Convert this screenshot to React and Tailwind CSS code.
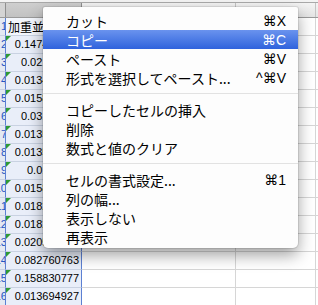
const values = [
  '0.147423581',
  '0.02185364',
  '0.013458719',
  '0.015821634',
  '0.03176584',
  '0.013596784',
  '0.013549021',
  '0.0174823',
  '0.015842793',
  '0.018245671',
  '0.018273942',
  '0.020587236',
  '0.082760763',
  '0.158830777',
  '0.013694927',
];

const menu = [
  { label: 'カット', key: '⌘X' },
  { label: 'コピー', key: '⌘C', active: true },
  { label: 'ペースト', key: '⌘V' },
  { label: '形式を選択してペースト...', key: '^⌘V' },
  { sep: true },
  { label: 'コピーしたセルの挿入' },
  { label: '削除' },
  { label: '数式と値のクリア' },
  { sep: true },
  { label: 'セルの書式設定...', key: '⌘1' },
  { label: '列の幅...' },
  { label: '表示しない' },
  { label: '再表示' },
];

const jp = 'font-["Noto_Sans_CJK_JP","Liberation_Sans",sans-serif]';

function Row({ n, children, header }) {
  return (
    <div className="flex h-[18px]">
      {/* row number, mostly scrolled out of view */}
      <div className="w-[5px] h-full flex justify-end items-center overflow-hidden bg-[#e4e9f2] border-b border-[#c9d2e2]">
        <span className="shrink-0 text-[11px] leading-none text-[#2456c4] font-['Liberation_Sans',sans-serif] -mr-[2px]">
          {n}
        </span>
      </div>
      <div
        className={`relative w-[77px] h-full border-l border-r border-[#5c80d2] border-b border-b-[#c9d2e2] ${
          header ? 'bg-[#f3f6fc]' : 'bg-[#e9eef9]'
        } flex items-center overflow-hidden`}
      >
        {children}
      </div>
      <div className="w-[154px] h-full border-r border-b border-[#d6d6d6] bg-white" />
      <div className="w-[80px] h-full border-r border-b border-[#d6d6d6] bg-white" />
      <div className="flex-1 h-full border-b border-[#d6d6d6] bg-white" />
    </div>
  );
}

export default function App() {
  return (
    <div className="relative w-[318px] h-[305px] overflow-hidden bg-white select-none">
      {/* column header strip */}
      <div className="h-[3px] bg-[#f3f3f3] border-b border-[#a9a9a9]" />
      <div className="flex h-[15px] border-b border-[#9a9a9a]">
        <div className="w-[5px] bg-[#d4d4d4]" />
        <div className="w-[77px] bg-gradient-to-b from-[#cfcfcf] to-[#c2c2c2] border-l border-r border-[#8f8f8f]" />
        <div className="w-[154px] bg-gradient-to-b from-[#f4f4f4] to-[#e4e4e4] border-r border-[#c4c4c4]" />
        <div className="w-[80px] bg-gradient-to-b from-[#f4f4f4] to-[#e4e4e4] border-r border-[#c4c4c4]" />
        <div className="flex-1 bg-gradient-to-b from-[#f4f4f4] to-[#e4e4e4]" />
      </div>

      <Row n="1" header>
        <span className={`pl-[2px] text-[12px] leading-none text-black whitespace-nowrap ${jp}`}>
          加重並び
        </span>
      </Row>
      {values.map((v, i) => (
        <Row key={i} n={String(i + 2)}>
          <span className="absolute left-0 top-0 w-0 h-0 border-t-[5px] border-r-[5px] border-t-[#2f9a35] border-r-transparent" />
          <span className="ml-auto pr-[2px] text-[11px] leading-none text-black font-['Liberation_Sans',sans-serif]">
            {v}
          </span>
        </Row>
      ))}

      {/* context menu */}
      <div className="absolute left-[43px] top-[7px] w-[255px] pt-[4px] pb-[2px] bg-[#fdfdfd] rounded-b-[5px] rounded-t-[2px] shadow-[0_7px_16px_rgba(0,0,0,0.38),0_0_0_1px_rgba(0,0,0,0.08)]">
        {menu.map((m, i) =>
          m.sep ? (
            <div key={i} className="h-[13px] flex items-center">
              <div className="w-full h-px bg-[#e2e2e2]" />
            </div>
          ) : (
            <div
              key={i}
              className={`h-[19px] flex items-center pl-[23px] pr-[12px] text-[14px] leading-none ${
                m.active
                  ? 'bg-gradient-to-b from-[#6a93ee] to-[#2f62dc] text-white'
                  : 'text-black'
              }`}
            >
              <span className={`whitespace-nowrap ${jp}`}>{m.label}</span>
              {m.key && (
                <span className="ml-auto whitespace-nowrap font-['Liberation_Sans','DejaVu_Sans',sans-serif]">
                  {m.key}
                </span>
              )}
            </div>
          )
        )}
      </div>
    </div>
  );
}
